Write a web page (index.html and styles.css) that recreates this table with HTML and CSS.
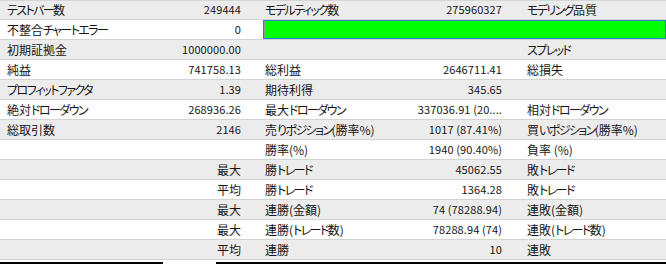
FILE: index.html
```html
<!DOCTYPE html>
<html lang="ja">
<head>
<meta charset="utf-8">
<title>Report</title>
<link rel="stylesheet" href="styles.css">
</head>
<body>
<div class="report">
  <div class="row odd first">
    <span class="lab la"><span class="k">テストバー</span>数</span><span class="val num">249444</span>
    <span class="lab"><span class="k">モデルティック</span>数</span><span class="val num vb">275960327</span>
    <span class="lab"><span class="k">モデリング</span>品質</span><span class="val"></span>
  </div>
  <div class="row">
    <span class="lab la">不整合<span class="k">チャートエラー</span></span><span class="val num">0</span>
    <span class="quality"><span class="fill"></span></span>
  </div>
  <div class="row odd">
    <span class="lab la">初期証拠金</span><span class="val num">1000000.00</span>
    <span class="lab"></span><span class="val vb"></span>
    <span class="lab"><span class="k">スプレッド</span></span><span class="val"></span>
  </div>
  <div class="row">
    <span class="lab la">純益</span><span class="val num">741758.13</span>
    <span class="lab">総利益</span><span class="val num vb">2646711.41</span>
    <span class="lab">総損失</span><span class="val"></span>
  </div>
  <div class="row odd">
    <span class="lab la"><span class="k">プロフィットファクタ</span></span><span class="val num">1.39</span>
    <span class="lab">期待利得</span><span class="val num vb">345.65</span>
    <span class="lab"></span><span class="val"></span>
  </div>
  <div class="row">
    <span class="lab la">絶対<span class="k">ドローダウン</span></span><span class="val num">268936.26</span>
    <span class="lab">最大<span class="k">ドローダウン</span></span><span class="val num vb">337036.91 (20....</span>
    <span class="lab">相対<span class="k">ドローダウン</span></span><span class="val"></span>
  </div>
  <div class="row odd">
    <span class="lab la">総取引数</span><span class="val num">2146</span>
    <span class="lab">売<span class="k">りポジション</span>(勝率%)</span><span class="val num vb">1017 (87.41%)</span>
    <span class="lab">買<span class="k">いポジション</span>(勝率%)</span><span class="val"></span>
  </div>
  <div class="row">
    <span class="lab la"></span><span class="val"></span>
    <span class="lab">勝率(%)</span><span class="val num vb">1940 (90.40%)</span>
    <span class="lab">負率 (%)</span><span class="val"></span>
  </div>
  <div class="row odd">
    <span class="lab la"></span><span class="val">最大</span>
    <span class="lab">勝<span class="k">トレード</span></span><span class="val num vb">45062.55</span>
    <span class="lab">敗<span class="k">トレード</span></span><span class="val"></span>
  </div>
  <div class="row">
    <span class="lab la"></span><span class="val">平均</span>
    <span class="lab">勝<span class="k">トレード</span></span><span class="val num vb">1364.28</span>
    <span class="lab">敗<span class="k">トレード</span></span><span class="val"></span>
  </div>
  <div class="row odd">
    <span class="lab la"></span><span class="val">最大</span>
    <span class="lab">連勝(金額)</span><span class="val num vb">74 (78288.94)</span>
    <span class="lab">連敗(金額)</span><span class="val"></span>
  </div>
  <div class="row">
    <span class="lab la"></span><span class="val">最大</span>
    <span class="lab">連勝(<span class="k">トレード</span>数)</span><span class="val num vb">78288.94 (74)</span>
    <span class="lab">連敗(<span class="k">トレード</span>数)</span><span class="val"></span>
  </div>
  <div class="row odd">
    <span class="lab la"></span><span class="val">平均</span>
    <span class="lab">連勝</span><span class="val num vb">10</span>
    <span class="lab">連敗</span><span class="val"></span>
  </div>
</div>
<div class="foot">
  <span class="line line-a"></span>
  <span class="line line-b"></span>
</div>
</body>
</html>
```

FILE: styles.css
```css
html, body {
  margin: 0;
  padding: 0;
  background: #ffffff;
}

body {
  width: 666px;
  overflow: hidden;
  font-family: "Noto Sans CJK JP", "Noto Sans", sans-serif;
  font-feature-settings: "palt";
  font-size: 12px;
  color: #161616;
}

.report {
  display: flex;
  flex-direction: column;
}

.row {
  display: grid;
  grid-template-columns: 130px 132px 130px 132px 142px 0;
  height: 19px;
  line-height: 19px;
  border-bottom: 1px solid #d3d3d3;
  background: #ffffff;
  overflow: hidden;
}

.row.odd {
  background: #ececec;
}

.row.first {
  box-shadow: inset 0 1px 0 #d6d6d6;
}

.lab,
.val {
  white-space: nowrap;
  overflow: hidden;
}

.lab {
  padding-left: 3px;
}

.lab.la {
  padding-left: 7px;
}

.k {
  letter-spacing: -1.6px;
}

.val {
  text-align: right;
  padding-right: 21px;
}

.val.vb {
  padding-right: 22px;
}

.num {
  font-size: 11px;
  letter-spacing: 0.1px;
}

.quality {
  grid-column: 3 / 7;
  margin-left: 1px;
  border: 1px solid #2b7bd4;
  box-sizing: border-box;
  height: 19px;
  display: flex;
  background: #ffffff;
}

.fill {
  flex: 1;
  background: #00ff00;
  border-left: 1px solid #9a9a9a;
}

.foot {
  display: flex;
  gap: 53px;
  margin-top: 2px;
}

.line {
  height: 2px;
  background: #000000;
}

.line-a {
  width: 163px;
}

.line-b {
  flex: 1;
}
```
